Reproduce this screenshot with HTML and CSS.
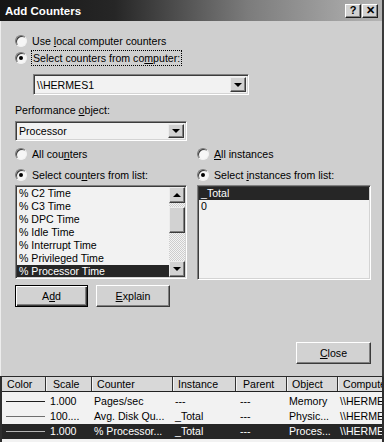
FILE: index.html
```html
<!DOCTYPE html>
<html lang="en">
<head>
    <meta charset="UTF-8">
    <title>Add Counters</title>
    <link rel="stylesheet" href="styles.css">
</head>
<body>
    <div class="window">
        <div class="titlebar">
            <span class="title">Add Counters</span>
            <div class="title-buttons">
                <span class="tbtn">?</span>
                <span class="tbtn">✕</span>
            </div>
        </div>

        <div class="dialog">
            <div class="radio-row">
                <span class="radio"></span>
                <span>Use <u>l</u>ocal computer counters</span>
            </div>
            <div class="radio-row">
                <span class="radio checked"></span>
                <span class="focus">Select counters from co<u>m</u>puter:</span>
            </div>

            <div class="combo combo-machine">
                <span class="combo-text">\\HERMES1</span>
                <span class="drop"><i class="arrow-down"></i></span>
            </div>

            <div class="label">Performance <u>o</u>bject:</div>
            <div class="combo combo-object">
                <span class="combo-text">Processor</span>
                <span class="drop"><i class="arrow-down"></i></span>
            </div>

            <div class="columns">
                <div class="col">
                    <div class="radio-row">
                        <span class="radio"></span>
                        <span>All cou<u>n</u>ters</span>
                    </div>
                    <div class="radio-row second">
                        <span class="radio checked"></span>
                        <span>Select cou<u>n</u>ters from list:</span>
                    </div>
                    <div class="listbox counters">
                        <div class="items">
                            <div class="item">% C2 Time</div>
                            <div class="item">% C3 Time</div>
                            <div class="item">% DPC Time</div>
                            <div class="item">% Idle Time</div>
                            <div class="item">% Interrupt Time</div>
                            <div class="item">% Privileged Time</div>
                            <div class="item selected">% Processor Time</div>
                        </div>
                        <div class="scrollbar">
                            <span class="sb-btn"><i class="arrow-up"></i></span>
                            <div class="track">
                                <span class="thumb"></span>
                            </div>
                            <span class="sb-btn"><i class="arrow-down"></i></span>
                        </div>
                    </div>
                    <div class="buttons">
                        <button class="btn default">A<u>d</u>d</button>
                        <button class="btn"><u>E</u>xplain</button>
                    </div>
                </div>

                <div class="col">
                    <div class="radio-row">
                        <span class="radio"></span>
                        <span><u>A</u>ll instances</span>
                    </div>
                    <div class="radio-row second">
                        <span class="radio checked"></span>
                        <span>Select <u>i</u>nstances from list:</span>
                    </div>
                    <div class="listbox instances">
                        <div class="items">
                            <div class="item selected">_Total</div>
                            <div class="item">0</div>
                        </div>
                    </div>
                </div>
            </div>

            <div class="footer">
                <button class="btn close"><u>C</u>lose</button>
            </div>
        </div>
    </div>

    <div class="listview">
        <div class="lv-row lv-head">
            <span>Color</span>
            <span>Scale</span>
            <span>Counter</span>
            <span>Instance</span>
            <span>Parent</span>
            <span>Object</span>
            <span>Computer</span>
        </div>
        <div class="lv-body">
            <div class="lv-row">
                <span><i class="sample dark"></i></span>
                <span>1.000</span>
                <span>Pages/sec</span>
                <span>---</span>
                <span>---</span>
                <span>Memory</span>
                <span>\\HERMES1</span>
            </div>
            <div class="lv-row">
                <span><i class="sample mid"></i></span>
                <span>100....</span>
                <span>Avg. Disk Qu...</span>
                <span>_Total</span>
                <span>---</span>
                <span>Physic...</span>
                <span>\\HERMES1</span>
            </div>
            <div class="lv-row selected">
                <span><i class="sample light"></i></span>
                <span>1.000</span>
                <span>% Processor...</span>
                <span>_Total</span>
                <span>---</span>
                <span>Proces...</span>
                <span>\\HERMES1</span>
            </div>
        </div>
    </div>
</body>
</html>
```

FILE: styles.css
```css
* {
    margin: 0;
    padding: 0;
    box-sizing: border-box;
}

body {
    width: 384px;
    height: 442px;
    overflow: hidden;
    font-family: "Liberation Sans", Arial, sans-serif;
    font-size: 10.6px;
    color: #000;
    background: #cfcfcf;
}

u {
    text-decoration: underline;
    text-underline-offset: 1px;
}

/* window frame */
.window {
    height: 377px;
    display: flex;
    flex-direction: column;
    background: #cfcfcf;
    border-right: 2px solid #3a3a3a;
    border-bottom: 1px solid #2a2a2a;
}

.titlebar {
    height: 21px;
    flex: none;
    display: flex;
    align-items: center;
    justify-content: space-between;
    padding: 0 4px 0 5px;
    background: linear-gradient(to right, #151515 0%, #262626 30%, #7c7c7c 65%, #b4b4b4 100%);
}

.title {
    color: #fff;
    font-weight: bold;
    font-size: 11.5px;
}

.title-buttons {
    display: flex;
    gap: 1px;
}

.tbtn {
    width: 16px;
    height: 14px;
    display: flex;
    align-items: center;
    justify-content: center;
    background: #d2d2d2;
    border: 1px solid;
    border-color: #fff #1e1e1e #1e1e1e #fff;
    box-shadow: inset -1px -1px 0 #808080;
    font-weight: bold;
    font-size: 11px;
    line-height: 1;
}

/* dialog body */
.dialog {
    flex: 1;
    display: flex;
    flex-direction: column;
    border-left: 1px solid #ededed;
    padding: 12px 11px 0 14px;
}

.radio-row {
    height: 16px;
    display: flex;
    align-items: center;
    gap: 5px;
}

.radio-row + .radio-row {
    margin-top: 1px;
}

.radio-row.second {
    margin-top: 5px;
}

.radio {
    position: relative;
    flex: none;
    width: 12px;
    height: 12px;
    border-radius: 50%;
    background: #f6f6f6;
    border: 1px solid;
    border-color: #7a7a7a #f2f2f2 #f2f2f2 #7a7a7a;
    box-shadow: inset 1px 1px 0 #3a3a3a;
}

.radio.checked::after {
    content: "";
    position: absolute;
    left: 3px;
    top: 3px;
    width: 4px;
    height: 4px;
    border-radius: 50%;
    background: #000;
}

.focus {
    margin-left: -1px;
    padding: 0 1px;
    line-height: 14px;
    border: 1px dotted #000;
}

.label {
    margin-top: 8px;
    height: 14px;
    line-height: 14px;
}

/* combo boxes */
.combo {
    display: flex;
    background: #f2f2f2;
    border: 1px solid;
    border-color: #808080 #fff #fff #808080;
    box-shadow: inset 1px 1px 0 #3c3c3c, inset -1px -1px 0 #d4d4d4;
    padding: 2px;
}

.combo-machine {
    width: 216px;
    height: 21px;
    margin: 8px 0 0 18px;
}

.combo-object {
    width: 172px;
    height: 20px;
    margin-top: 4px;
}

.combo-text {
    flex: 1;
    display: flex;
    align-items: center;
    padding-left: 1px;
}

.drop {
    width: 16px;
    display: flex;
    align-items: center;
    justify-content: center;
    background: #d2d2d2;
    border: 1px solid;
    border-color: #ececec #3a3a3a #3a3a3a #ececec;
    box-shadow: inset -1px -1px 0 #808080;
}

.arrow-down,
.arrow-up {
    display: block;
    width: 0;
    height: 0;
    border-left: 4px solid transparent;
    border-right: 4px solid transparent;
}

.arrow-down {
    border-top: 4px solid #000;
}

.arrow-up {
    border-bottom: 4px solid #000;
}

/* two columns */
.columns {
    margin-top: 5px;
    display: grid;
    grid-template-columns: 172px 174px;
    gap: 10px;
    align-items: start;
}

.col {
    display: flex;
    flex-direction: column;
}

.listbox {
    margin-top: 2px;
    display: flex;
    background: #f2f2f2;
    border: 1px solid;
    border-color: #808080 #fff #fff #808080;
    box-shadow: inset 1px 1px 0 #3c3c3c, inset -1px -1px 0 #d4d4d4;
    padding: 1px;
    overflow: hidden;
}

.listbox.counters {
    height: 94px;
}

.listbox.instances {
    height: 95px;
}

.items {
    flex: 1;
    overflow: hidden;
}

.item {
    height: 13px;
    line-height: 13px;
    padding-left: 2px;
    white-space: nowrap;
}

.item.selected {
    background: #262626;
    color: #fff;
}

.scrollbar {
    width: 16px;
    display: flex;
    flex-direction: column;
}

.sb-btn {
    height: 16px;
    flex: none;
    display: flex;
    align-items: center;
    justify-content: center;
    background: #d2d2d2;
    border: 1px solid;
    border-color: #ececec #3a3a3a #3a3a3a #ececec;
    box-shadow: inset -1px -1px 0 #808080;
}

.track {
    flex: 1;
    padding-top: 4px;
    background: repeating-conic-gradient(#f4f4f4 0 25%, #cdcdcd 0 50%) 0 0 / 2px 2px;
}

.thumb {
    display: block;
    height: 26px;
    background: #d2d2d2;
    border: 1px solid;
    border-color: #ececec #3a3a3a #3a3a3a #ececec;
    box-shadow: inset -1px -1px 0 #808080;
}

/* push buttons */
.buttons {
    margin-top: 6px;
    display: flex;
    gap: 8px;
}

.btn {
    height: 22px;
    width: 74px;
    font: inherit;
    color: #000;
    background: #d2d2d2;
    border: 1px solid;
    border-color: #fff #3a3a3a #3a3a3a #fff;
    box-shadow: inset -1px -1px 0 #808080;
}

.btn.default {
    width: 73px;
    border-color: #000;
    box-shadow: inset 1px 1px 0 #fff, inset -1px -1px 0 #3a3a3a, inset -2px -2px 0 #808080;
}

.footer {
    margin-top: 35px;
    display: flex;
    justify-content: flex-end;
}

.btn.close {
    width: 75px;
}

/* counter list view */
.listview {
    height: 65px;
    background: #f2f2f2;
    border-left: 2px solid #2e2e2e;
    border-right: 2px solid #2e2e2e;
    overflow: hidden;
}

.lv-row {
    display: grid;
    grid-template-columns: 43px 46px 81px 63px 51px 51px 60px;
    height: 15px;
    line-height: 15px;
    white-space: nowrap;
}

.lv-row span {
    overflow: hidden;
    padding-left: 3px;
}

.lv-row span:nth-child(1) {
    display: flex;
    align-items: center;
    padding-left: 4px;
}

.lv-row span:nth-child(2),
.lv-row span:nth-child(5) {
    padding-left: 5px;
}

.lv-head {
    height: 15px;
    line-height: 14px;
    background: #d8d8d8;
    border-bottom: 1px solid #222;
}

.lv-head span {
    padding-left: 5px;
    border-left: 1px solid #333;
    box-shadow: inset 1px 0 0 #f4f4f4;
}

.lv-head span:nth-child(1) {
    display: block;
    border-left: none;
    box-shadow: none;
    padding-left: 5px;
}

.lv-head span:nth-child(2),
.lv-head span:nth-child(5) {
    padding-left: 7px;
}

.lv-body {
    padding-top: 2px;
}

.lv-row.selected {
    background: #262626;
    color: #fff;
}

.sample {
    display: block;
    width: 39px;
    height: 1px;
}

.sample.dark {
    background: #1e1e1e;
}

.sample.mid {
    background: #6e6e6e;
}

.sample.light {
    background: #b4b4b4;
}
```
